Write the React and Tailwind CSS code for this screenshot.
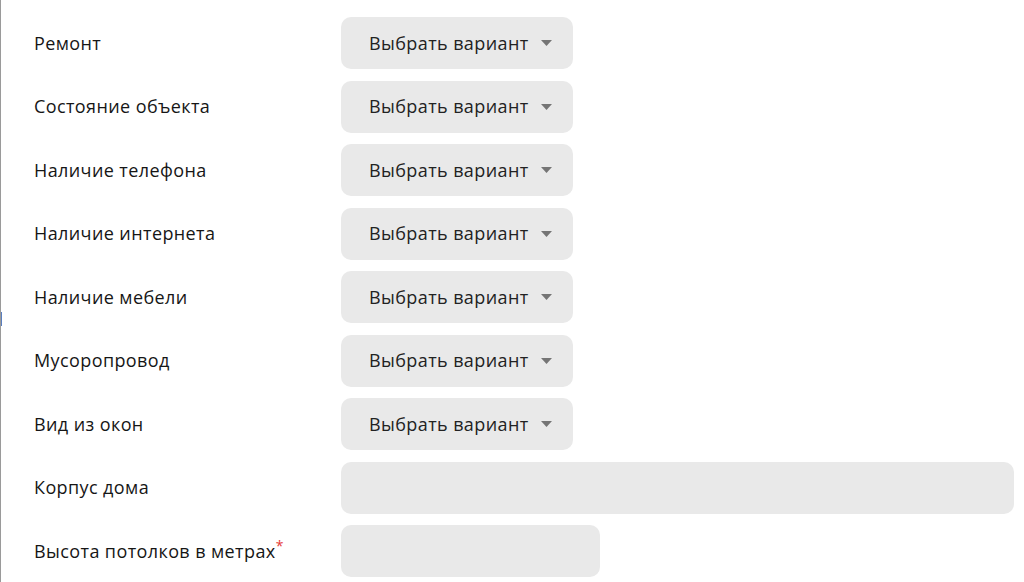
import React from "react";

const selects = [
  "Ремонт",
  "Состояние объекта",
  "Наличие телефона",
  "Наличие интернета",
  "Наличие мебели",
  "Мусоропровод",
  "Вид из окон",
];

function Caret() {
  return (
    <svg width="11" height="6" viewBox="0 0 11 6" className="ml-[12px]">
      <path d="M0 0 L11 0 L5.5 6 Z" fill="#757575" />
    </svg>
  );
}

export default function App() {
  return (
    <div
      className="relative w-[1024px] h-[582px] bg-white overflow-hidden border-l border-[#9a9a9a] text-[#161616] tracking-[0.4px]"
      style={{ fontFamily: '"Open Sans", "Noto Sans", sans-serif' }}
    >
      <div className="absolute left-[-1px] top-[312px] w-[2px] h-[14px] bg-[#5a7fc0]" />
      <div className="flex flex-col pt-[17px]">
        {selects.map((label) => (
          <div key={label} className="flex h-[63.5px] items-start">
            <div className="w-[340px] pl-[33px] h-[52px] flex items-center text-[18px]">
              {label}
            </div>
            <div className="w-[232px] h-[52px] rounded-[10px] bg-[#e9e9e9] flex items-center pl-[28px] text-[18px] text-[#222]">
              Выбрать вариант
              <Caret />
            </div>
          </div>
        ))}
        <div className="flex h-[63.5px] items-start">
          <div className="w-[340px] pl-[33px] h-[52px] flex items-center text-[18px]">
            Корпус дома
          </div>
          <div className="w-[673px] h-[52px] rounded-[10px] bg-[#e9e9e9]" />
        </div>
        <div className="flex h-[63.5px] items-start">
          <div className="w-[340px] pl-[33px] h-[52px] flex items-center text-[18px]">
            Высота потолков в метрах
            <span className="text-[#e53935] self-start mt-[14px] text-[14px] leading-none">*</span>
          </div>
          <div className="w-[259px] h-[52px] rounded-[10px] bg-[#e9e9e9]" />
        </div>
      </div>
    </div>
  );
}
